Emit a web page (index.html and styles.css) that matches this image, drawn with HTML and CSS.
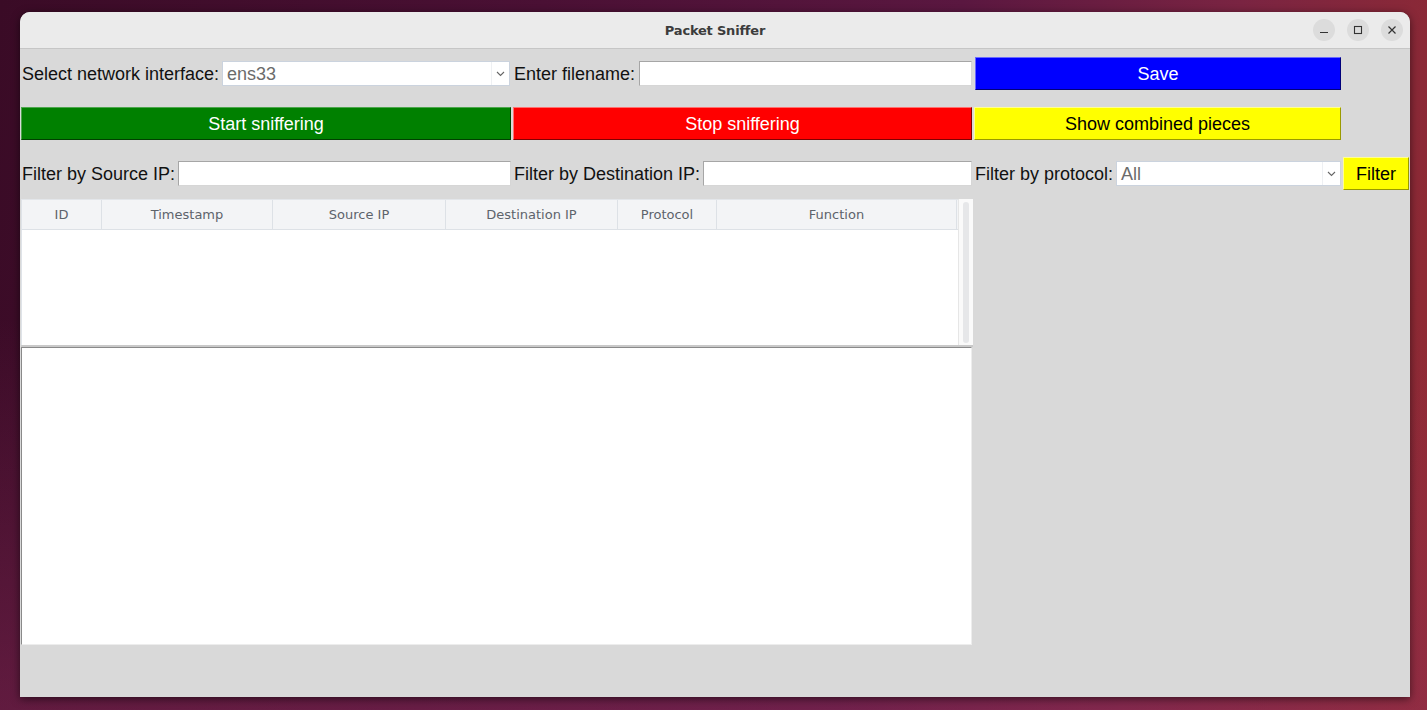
FILE: index.html
```html
<!DOCTYPE html>
<html>
<head>
<meta charset="utf-8">
<title>Packet Sniffer</title>
<link rel="stylesheet" href="styles.css">
</head>
<body>
<div class="desktop">
  <div class="window">
    <div class="titlebar">
      <div class="title">Packet Sniffer</div>
      <div class="controls">
        <span class="ctl"><svg width="12" height="12" viewBox="0 0 12 12"><path d="M2 8.5h8" stroke="#333" stroke-width="1.2"/></svg></span>
        <span class="ctl"><svg width="12" height="12" viewBox="0 0 12 12"><rect x="2.5" y="2.5" width="7" height="7" fill="none" stroke="#333" stroke-width="1.1"/></svg></span>
        <span class="ctl"><svg width="12" height="12" viewBox="0 0 12 12"><path d="M2.5 2.5l7 7M9.5 2.5l-7 7" stroke="#333" stroke-width="1.2"/></svg></span>
      </div>
    </div>
    <div class="content">
      <div class="row row-a">
        <label class="lbl l-first">Select network interface:</label>
        <div class="combo c-iface"><span class="combo-val">ens33</span><span class="combo-arrow"><svg width="9" height="6" viewBox="0 0 9 6"><path d="M1 1l3.5 3.5L8 1" fill="none" stroke="#666" stroke-width="1.1"/></svg></span></div>
        <label class="lbl l-file">Enter filename:</label>
        <div class="entry e-file"></div>
        <button class="btn btn-blue b-save">Save</button>
      </div>
      <div class="row row-a row-gap">
        <button class="btn btn-green b-start">Start sniffering</button>
        <button class="btn btn-red b-stop">Stop sniffering</button>
        <button class="btn btn-yellow b-show">Show combined pieces</button>
      </div>
      <div class="row row-b row-gap">
        <label class="lbl l-first">Filter by Source IP:</label>
        <div class="entry e-b"></div>
        <label class="lbl l-b">Filter by Destination IP:</label>
        <div class="entry e-b"></div>
        <label class="lbl l-b">Filter by protocol:</label>
        <div class="combo c-b"><span class="combo-val">All</span><span class="combo-arrow"><svg width="9" height="6" viewBox="0 0 9 6"><path d="M1 1l3.5 3.5L8 1" fill="none" stroke="#666" stroke-width="1.1"/></svg></span></div>
        <button class="btn btn-yellow b-filter">Filter</button>
      </div>
      <div class="table">
        <div class="tree">
          <div class="thead">
            <div class="th w-id">ID</div>
            <div class="th w-ts">Timestamp</div>
            <div class="th w-src">Source IP</div>
            <div class="th w-dst">Destination IP</div>
            <div class="th w-proto">Protocol</div>
            <div class="th w-fn">Function</div>
          </div>
          <div class="tbody"></div>
        </div>
        <div class="scroll"><div class="track"></div></div>
      </div>
      <div class="textarea"></div>
    </div>
  </div>
</div>
</body>
</html>
```

FILE: styles.css
```css
* { box-sizing: border-box; }
html, body { margin: 0; padding: 0; }
body {
  width: 1427px;
  height: 710px;
  overflow: hidden;
  font-family: "Liberation Sans", Arial, sans-serif;
}
.desktop {
  position: relative;
  width: 1427px;
  height: 710px;
  background:
    linear-gradient(180deg, rgba(0,0,0,0) 45%, rgba(140,45,90,0.45) 100%),
    linear-gradient(100deg, #3a0b26 0%, #4a1034 35%, #5a1740 62%, #7a2442 80%, #952c30 100%);
}
.window {
  position: absolute;
  left: 20px;
  top: 12px;
  width: 1390px;
  height: 685px;
  background: #d9d9d9;
  border-radius: 10px 10px 0 0;
  box-shadow: 0 2px 8px rgba(0,0,0,0.55);
  overflow: hidden;
}
.titlebar {
  position: relative;
  height: 37px;
  background: #ebebeb;
  border-bottom: 1px solid #c6c6c6;
  display: flex;
  align-items: center;
  justify-content: center;
}
.title {
  font-family: "DejaVu Sans", sans-serif;
  font-weight: bold;
  font-size: 13px;
  color: #3c3c3c;
  letter-spacing: -0.2px;
}
.controls {
  position: absolute;
  right: 7px;
  top: 7px;
  display: flex;
  gap: 12px;
}
.ctl {
  width: 22px;
  height: 22px;
  border-radius: 50%;
  background: #dcdcdc;
  display: flex;
  align-items: center;
  justify-content: center;
}
.content {
  padding: 8px 0 0 1px;
  display: flex;
  flex-direction: column;
}
.row {
  display: grid;
  height: 33px;
  align-items: center;
}
.row-gap { margin-top: 17px; }
.row-a { grid-template-columns: 200px 290px 127px 335px 369px 68px; }
.row-b { grid-template-columns: 156px 335px 190px 271px 142px 227px 68px; }
.lbl {
  font-size: 18px;
  color: #111;
  white-space: nowrap;
  padding-top: 2px;
}
.l-first { padding-left: 1px; }
.l-file { padding-left: 3px; }
.l-b { padding-left: 2px; }
.entry {
  height: 25px;
  background: #fff;
  border: 1px solid #a6a6a6;
  border-right-color: #d6d6d6;
  border-bottom-color: #d6d6d6;
}
.e-file { margin: 0 1px 0 1px; }
.e-b { margin: 0 1px; }
.combo {
  height: 25px;
  background: #fff;
  border: 1px solid #cbd3de;
  display: flex;
  align-items: center;
}
.c-iface { margin: 0 1px; }
.c-b { margin: 0 1px; }
.combo-val {
  flex: 1;
  font-size: 18px;
  color: #6b6b6b;
  padding-left: 4px;
  padding-top: 2px;
}
.combo-arrow {
  width: 18px;
  height: 100%;
  border-left: 1px solid #eef0f3;
  display: flex;
  align-items: center;
  justify-content: center;
  padding-top: 1px;
}
.btn {
  height: 33px;
  font-family: "Liberation Sans", Arial, sans-serif;
  font-size: 18px;
  border: 1px solid;
  padding: 2px 0 0 0;
  margin: 0;
}
.btn-blue { background: #0000ff; color: #fff; border-color: #6a6aff #00007a #00007a #6a6aff; }
.btn-green { background: #008000; color: #fff; border-color: #4da64d #004000 #004000 #4da64d; }
.btn-red { background: #ff0000; color: #fff; border-color: #ff7070 #800000 #800000 #ff7070; }
.btn-yellow { background: #ffff00; color: #000; border-color: #ffff90 #9a9a00 #9a9a00 #ffff90; }
.b-save { margin: 0 1px 0 2px; }
.b-start { grid-column: 1 / 3; }
.b-stop { grid-column: 3 / 5; margin: 0 1px 0 2px; }
.b-show { grid-column: 5 / 6; margin: 0 1px; }
.b-filter { margin: 0 1px; }
.table {
  margin-top: 9px;
  width: 952px;
  height: 148px;
  display: flex;
  border-bottom: 2px solid #c9c9c9;
}
.tree {
  width: 937px;
  display: flex;
  flex-direction: column;
  background: #fff;
  border-top: 1px solid #e3e6ea;
  border-left: 1px solid #dfe3e8;
}
.thead {
  display: flex;
  height: 30px;
  background: #f3f4f6;
  border-bottom: 1px solid #dde1e6;
}
.th {
  font-family: "DejaVu Sans", sans-serif;
  font-size: 13px;
  color: #5d636b;
  display: flex;
  align-items: center;
  justify-content: center;
  border-right: 1px solid #dde1e6;
}
.w-id { width: 80px; }
.w-ts { width: 171px; }
.w-src { width: 173px; }
.w-dst { width: 172px; }
.w-proto { width: 99px; }
.w-fn { width: 240px; }
.tbody { flex: 1; background: #fff; }
.scroll {
  width: 15px;
  background: #fafafa;
  border-left: 1px solid #e6e6e6;
  padding: 3px 2px 2px 4px;
}
.track {
  width: 6px;
  height: 100%;
  background: #e6e7e9;
  border-radius: 3px;
}
.textarea {
  width: 951px;
  height: 298px;
  background: #fff;
  border: 1px solid #8a8a8a;
  border-right-color: #ededed;
  border-bottom-color: #ededed;
}
```
